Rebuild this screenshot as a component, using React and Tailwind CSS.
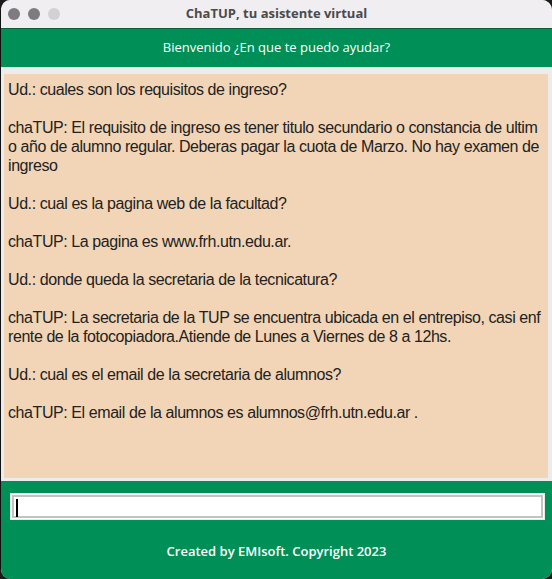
import React from "react";

const lines = [
  "Ud.: cuales son los requisitos de ingreso?",
  "",
  "chaTUP: El requisito de ingreso es tener titulo secundario o constancia de ultim",
  "o año de alumno regular. Deberas pagar la cuota de Marzo. No hay examen de",
  "ingreso",
  "",
  "Ud.: cual es la pagina web de la facultad?",
  "",
  "chaTUP: La pagina es www.frh.utn.edu.ar.",
  "",
  "Ud.: donde queda la secretaria de la tecnicatura?",
  "",
  "chaTUP: La secretaria de la TUP se encuentra ubicada en el entrepiso, casi enf",
  "rente de la fotocopiadora.Atiende de Lunes a Viernes de 8 a 12hs.",
  "",
  "Ud.: cual es el email de la secretaria de alumnos?",
  "",
  "chaTUP: El email de la alumnos es alumnos@frh.utn.edu.ar .",
];

export default function App() {
  return (
    <div className="w-[552px] h-[579px] bg-[#1b1b1b] overflow-hidden">
      <div className="w-[552px] h-[579px] rounded-[10px] overflow-hidden flex flex-col bg-[#ececec] border-l border-[#111]">
        <div className="h-[28px] bg-[#f1eef1] relative flex items-center justify-center shrink-0">
          <div className="absolute left-[7px] top-[8px] flex gap-[8px]">
            <div className="w-[12px] h-[12px] rounded-full bg-[#7e7c80]" />
            <div className="w-[12px] h-[12px] rounded-full bg-[#7e7c80]" />
            <div className="w-[12px] h-[12px] rounded-full bg-[#d3d1d4]" />
          </div>
          <span className="text-[13px] font-bold text-[#4b4a4c]" style={{ fontFamily: '"Open Sans", sans-serif' }}>
            ChaTUP, tu asistente virtual
          </span>
        </div>
        <div className="h-[39px] bg-[#008f56] border-t border-[#0b5e3a] flex items-center justify-center shrink-0">
          <span className="text-[13px] font-medium text-white" style={{ fontFamily: '"Open Sans", sans-serif' }}>
            Bienvenido ¿En que te puedo ayudar?
          </span>
        </div>
        <div className="pt-[7px] pl-[3px] pr-[4px] pb-[3px] flex-1 flex flex-col min-h-0">
          <div className="flex-1 bg-[#f2d5b6] pl-[4px] pt-[6px] text-[16px] leading-[19px] text-[#222] tracking-[-0.42px]" style={{ fontFamily: '"Liberation Sans", Arial, sans-serif' }}>
            {lines.map((l, i) => (
              <div key={i} className="h-[19px] whitespace-pre">{l}</div>
            ))}
          </div>
        </div>
        <div className="h-[98px] bg-[#008f56] shrink-0 flex flex-col items-center">
          <div className="mt-[12px] w-[535px] h-[27px] ml-[1px] bg-white border border-[#e9e9e9] p-[1px]">
            <div className="w-full h-full border-2 border-[#c3c3c5] bg-white relative">
              <div className="absolute left-[2px] top-[2px] w-[2px] h-[18px] bg-black" />
            </div>
          </div>
          <div className="mt-[22px] text-[13px] font-semibold text-white" style={{ fontFamily: '"Open Sans", sans-serif' }}>
            Created by EMIsoft. Copyright 2023
          </div>
        </div>
      </div>
    </div>
  );
}
